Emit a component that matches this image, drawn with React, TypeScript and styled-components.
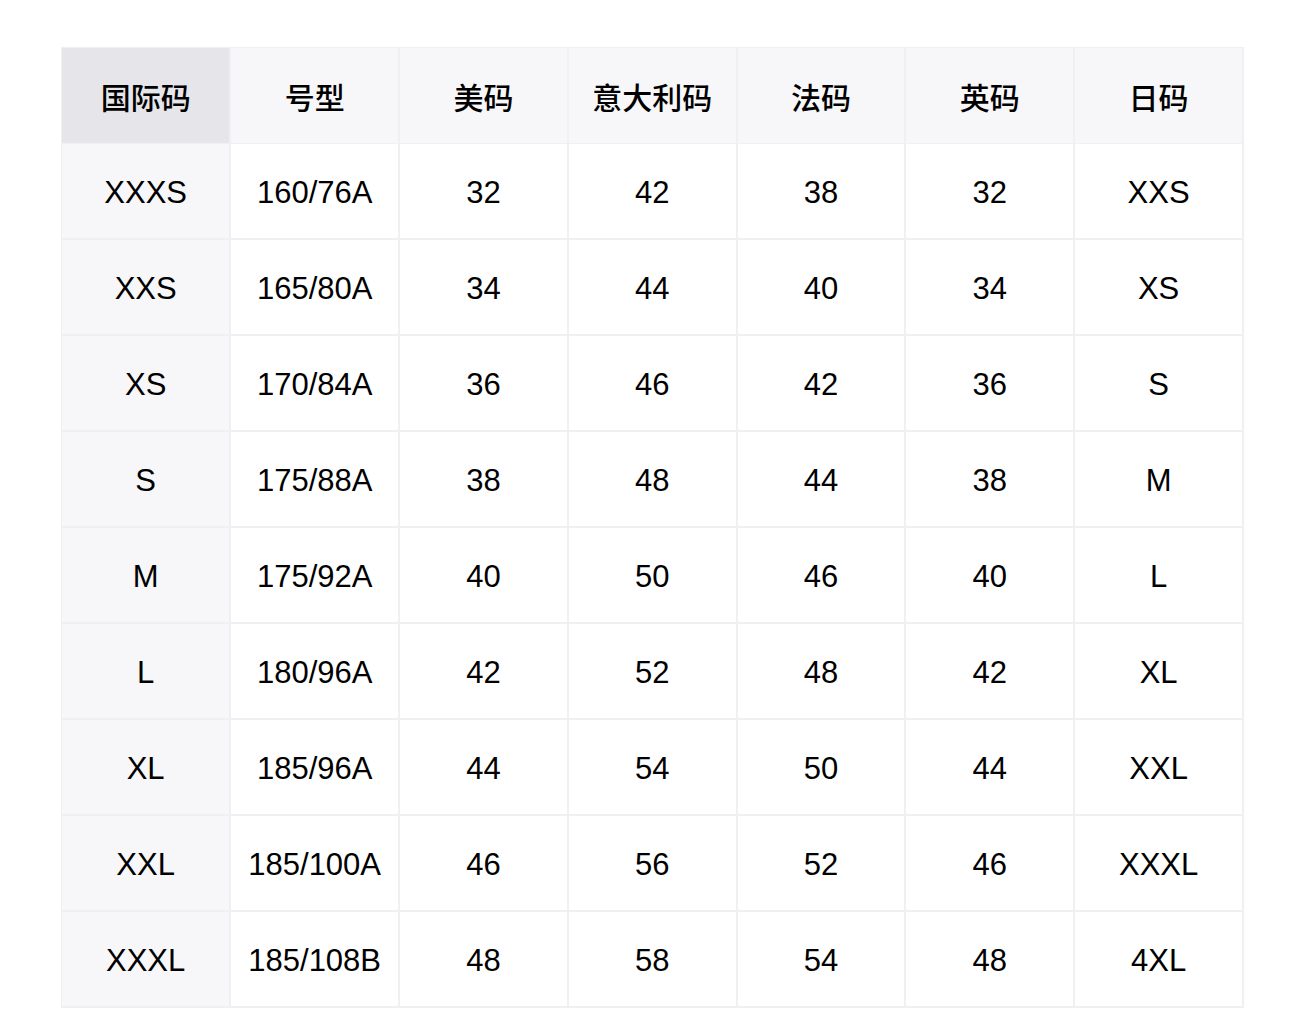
import React from "react";
import styled, { createGlobalStyle } from "styled-components";

const Global = createGlobalStyle`
  html, body { margin: 0; padding: 0; background: #ffffff; }
  body { font-family: "Liberation Sans", "Noto Sans CJK SC", sans-serif; color: #000; }
`;

const Page = styled.div`
  padding: 47px 0 0 61px;
`;

const Table = styled.table`
  width: 1183px;
  border-collapse: collapse;
  table-layout: fixed;
  border-top: 1px solid #f0f0f2;
  border-left: 1px solid #f0f0f2;
`;

const HeadCell = styled.th<{ $first?: boolean }>`
  height: 95px;
  padding: 0;
  background: ${(p) => (p.$first ? "#e6e6ea" : "#f7f7f9")};
  font-family: "Noto Sans CJK SC", "Liberation Sans", sans-serif;
  font-weight: 500;
  font-size: 30px;
  color: #000;
  text-align: center;
  border-right: 2px solid #f0f0f3;
  border-bottom: 1px solid #f0f0f3;
`;

const Cell = styled.td<{ $first?: boolean }>`
  height: 91px;
  padding: 3px 0 0;
  background: ${(p) => (p.$first ? "#f7f7f9" : "#ffffff")};
  font-size: 31px;
  color: #000;
  text-align: center;
  border-right: 2px solid #f0f0f3;
  border-bottom: 2px solid #f0f0f3;
`;

const headers = ["国际码", "号型", "美码", "意大利码", "法码", "英码", "日码"];

const rows: string[][] = [
  ["XXXS", "160/76A", "32", "42", "38", "32", "XXS"],
  ["XXS", "165/80A", "34", "44", "40", "34", "XS"],
  ["XS", "170/84A", "36", "46", "42", "36", "S"],
  ["S", "175/88A", "38", "48", "44", "38", "M"],
  ["M", "175/92A", "40", "50", "46", "40", "L"],
  ["L", "180/96A", "42", "52", "48", "42", "XL"],
  ["XL", "185/96A", "44", "54", "50", "44", "XXL"],
  ["XXL", "185/100A", "46", "56", "52", "46", "XXXL"],
  ["XXXL", "185/108B", "48", "58", "54", "48", "4XL"],
];

export default function App() {
  return (
    <>
      <Global />
      <Page>
        <Table>
          <thead>
            <tr>
              {headers.map((h, i) => (
                <HeadCell key={h} $first={i === 0}>
                  {h}
                </HeadCell>
              ))}
            </tr>
          </thead>
          <tbody>
            {rows.map((r) => (
              <tr key={r[0]}>
                {r.map((c, i) => (
                  <Cell key={i} $first={i === 0}>
                    {c}
                  </Cell>
                ))}
              </tr>
            ))}
          </tbody>
        </Table>
      </Page>
    </>
  );
}
